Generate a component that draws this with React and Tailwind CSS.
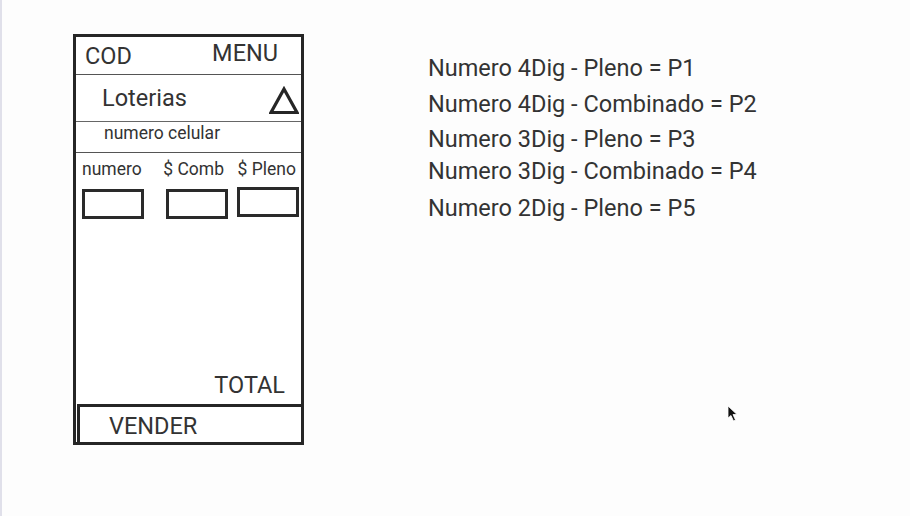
import React from 'react';

const rules = [
    { text: 'Numero 4Dig - Pleno = P1', mt: 'mt-0' },
    { text: 'Numero 4Dig - Combinado = P2', mt: 'mt-[10px]' },
    { text: 'Numero 3Dig - Pleno = P3', mt: 'mt-[9px]' },
    { text: 'Numero 3Dig - Combinado = P4', mt: 'mt-[6px]' },
    { text: 'Numero 2Dig - Pleno = P5', mt: 'mt-[11px]' },
];

const Field = ({ className }) => (
    <div className={`h-[30px] w-[62px] border-[3px] border-[#2a2a2a] bg-white ${className || ''}`}></div>
);

const App = () => {
    return (
        <div
            className="relative flex h-[516px] w-[910px] overflow-hidden border-l-2 border-[#e0e0ea] bg-[#fdfdfd] text-[#333]"
            style={{ fontFamily: 'Roboto, "Liberation Sans", sans-serif' }}
        >
            {/* phone wireframe */}
            <div className="ml-[71px] mt-[34px] flex h-[411px] w-[231px] flex-col border-[3px] border-[#262626] bg-white">
                <div className="flex h-[38px] justify-between border-b border-[#555]">
                    <span className="ml-[9px] mt-[6px] text-[23.5px] leading-[26px]">COD</span>
                    <span className="mr-[23px] mt-[3px] text-[23.5px] leading-[26px]">MENU</span>
                </div>
                <div className="flex h-[47px] items-start justify-between border-b border-[#666]">
                    <span className="ml-[26px] mt-[10px] text-[23.5px] leading-[26px]">Loterias</span>
                    <svg width="30" height="29" viewBox="0 0 30 29" className="mr-[2px] mt-[11px]">
                        <path d="M15 3 L28 26.5 L2 26.5 Z" fill="none" stroke="#262626" strokeWidth="3.2" strokeLinejoin="miter" />
                    </svg>
                </div>
                <div className="h-[31px] border-b border-[#555]">
                    <span className="ml-[28px] mt-[1px] block text-[17.5px] leading-[20px]">numero celular</span>
                </div>
                <div className="flex items-start justify-between pl-[6px] pr-[5px] pt-[6px] text-[17.5px] leading-[20px]">
                    <span>numero</span>
                    <span className="ml-[8px]">$ Comb</span>
                    <span>$ Pleno</span>
                </div>
                <div className="flex items-start pl-[6px] pt-[10px]">
                    <Field />
                    <Field className="ml-[22px]" />
                    <Field className="ml-[9px] -mt-[2px] h-[28px]" />
                </div>
                <div className="flex-1"></div>
                <div className="flex justify-end pb-[6px] pr-[16px]">
                    <span className="text-[23.5px] leading-[26px]">TOTAL</span>
                </div>
                <div className="ml-[1px] flex h-[38px] items-center border-[3px] border-b-0 border-r-0 border-[#262626]">
                    <span className="ml-[29px] mt-[2px] text-[23.5px] leading-[26px]">VENDER</span>
                </div>
            </div>

            {/* price codes */}
            <div className="ml-[124px] mt-[55px] flex flex-col text-[23.5px] leading-[26px]">
                {rules.map((r) => (
                    <span key={r.text} className={r.mt}>{r.text}</span>
                ))}
            </div>

            {/* mouse pointer */}
            <svg width="12" height="18" viewBox="0 0 12 18" className="absolute left-[725px] top-[405px]">
                <path d="M1 1 L1 13 L4 10.5 L6.5 16 L8.5 15 L6 9.5 L10 9.5 Z" fill="#111" stroke="#fff" strokeWidth="0.8" />
            </svg>
        </div>
    );
};

export default App;
